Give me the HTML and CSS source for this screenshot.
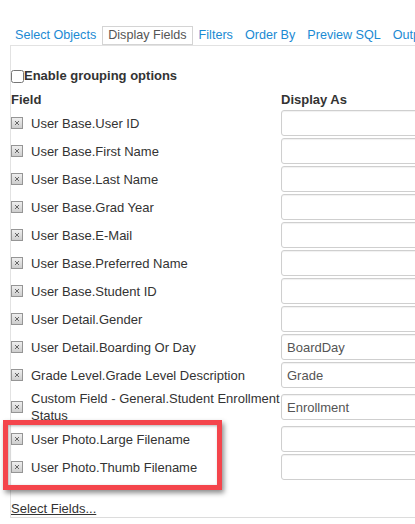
FILE: index.html
```html
<!DOCTYPE html>
<html>
<head>
<meta charset="utf-8">
<link rel="stylesheet" href="styles.css">
</head>
<body>
<div class="tabs">
  <a class="tab">Select Objects</a>
  <a class="tab active">Display Fields</a>
  <a class="tab">Filters</a>
  <a class="tab">Order By</a>
  <a class="tab">Preview SQL</a>
  <a class="tab">Output</a>
</div>
<div class="panel">
  <label class="group"><input type="checkbox" class="chk">Enable grouping options</label>
  <table class="fields">
    <colgroup><col class="c1"><col class="c2"></colgroup>
    <thead><tr><th>Field</th><th>Display As</th></tr></thead>
    <tbody>
      <tr><td><div class="f"><svg class="x" viewBox="0 0 12 12"><use href="#xi"/></svg><span>User Base.User ID</span></div></td><td><input class="inp" type="text"></td></tr>
      <tr><td><div class="f"><svg class="x" viewBox="0 0 12 12"><use href="#xi"/></svg><span>User Base.First Name</span></div></td><td><input class="inp" type="text"></td></tr>
      <tr><td><div class="f"><svg class="x" viewBox="0 0 12 12"><use href="#xi"/></svg><span>User Base.Last Name</span></div></td><td><input class="inp" type="text"></td></tr>
      <tr><td><div class="f"><svg class="x" viewBox="0 0 12 12"><use href="#xi"/></svg><span>User Base.Grad Year</span></div></td><td><input class="inp" type="text"></td></tr>
      <tr><td><div class="f"><svg class="x" viewBox="0 0 12 12"><use href="#xi"/></svg><span>User Base.E-Mail</span></div></td><td><input class="inp" type="text"></td></tr>
      <tr><td><div class="f"><svg class="x" viewBox="0 0 12 12"><use href="#xi"/></svg><span>User Base.Preferred Name</span></div></td><td><input class="inp" type="text"></td></tr>
      <tr><td><div class="f"><svg class="x" viewBox="0 0 12 12"><use href="#xi"/></svg><span>User Base.Student ID</span></div></td><td><input class="inp" type="text"></td></tr>
      <tr><td><div class="f"><svg class="x" viewBox="0 0 12 12"><use href="#xi"/></svg><span>User Detail.Gender</span></div></td><td><input class="inp" type="text"></td></tr>
      <tr><td><div class="f"><svg class="x" viewBox="0 0 12 12"><use href="#xi"/></svg><span>User Detail.Boarding Or Day</span></div></td><td><input class="inp" type="text" value="BoardDay"></td></tr>
      <tr><td><div class="f"><svg class="x" viewBox="0 0 12 12"><use href="#xi"/></svg><span>Grade Level.Grade Level Description</span></div></td><td><input class="inp" type="text" value="Grade"></td></tr>
      <tr><td><div class="f"><svg class="x" viewBox="0 0 12 12"><use href="#xi"/></svg><span>Custom Field - General.Student Enrollment Status</span></div></td><td><input class="inp" type="text" value="Enrollment"></td></tr>
      <tr><td><div class="f"><svg class="x" viewBox="0 0 12 12"><use href="#xi"/></svg><span>User Photo.Large Filename</span></div></td><td><input class="inp" type="text"></td></tr>
      <tr><td><div class="f"><svg class="x" viewBox="0 0 12 12"><use href="#xi"/></svg><span>User Photo.Thumb Filename</span></div></td><td><input class="inp" type="text"></td></tr>
    </tbody>
  </table>
  <a class="select">Select Fields...</a>
</div>
<div class="highlight"></div>
<svg class="defs" width="0" height="0">
  <defs>
    <linearGradient id="xg" x1="0" y1="0" x2="0" y2="1">
      <stop offset="0" stop-color="#f0f0f0"/>
      <stop offset="1" stop-color="#cccccc"/>
    </linearGradient>
    <g id="xi">
      <rect x="0.5" y="0.5" width="11" height="11" fill="url(#xg)" stroke="#959595"/>
      <path d="M4 4 L8 8 M8 4 L4 8" stroke="#666" stroke-width="1" fill="none"/>
    </g>
  </defs>
</svg>
</body>
</html>
```
FILE: styles.css
```css
html, body {
  margin: 0;
  padding: 0;
  overflow: hidden;
  background: #fff;
}
body {
  font-family: "Liberation Sans", Arial, sans-serif;
  font-size: 13px;
  color: #333;
  width: 415px;
  height: 524px;
}
.tabs {
  display: flex;
  margin-top: 26px;
  padding-left: 9px;
  white-space: nowrap;
}
.tab {
  display: block;
  padding: 1px 5px;
  line-height: 15px;
  font-size: 12.6px;
  border: 1px solid transparent;
  color: #1b8ad3;
  flex: none;
}
.tab.active {
  color: #555;
  border-color: #d4d4d4;
  background: #fff;
}
.panel {
  margin-left: 10px;
  width: 500px;
  border-top: 1px solid #e2e2e2;
  border-left: 1px solid #e2e2e2;
  border-bottom: 1px solid #dcdcdc;
}
.group {
  display: flex;
  align-items: center;
  margin-top: 22px;
  line-height: 16px;
  font-weight: bold;
}
.chk {
  margin: 0;
  width: 13px;
  height: 13px;
}
.fields {
  margin-top: 7px;
  border-collapse: collapse;
  table-layout: fixed;
  width: 480px;
}
.c1 { width: 270px; }
.c2 { width: 210px; }
.fields th {
  text-align: left;
  font-weight: bold;
  padding: 1px 0;
  line-height: 16px;
}
.fields td {
  padding: 1px 0;
  line-height: 17px;
  vertical-align: middle;
}
.f {
  display: flex;
  align-items: center;
  gap: 8px;
}
.x {
  width: 12px;
  height: 12px;
  flex: none;
}
.inp {
  display: block;
  box-sizing: border-box;
  width: 200px;
  height: 26px;
  margin: 0;
  padding: 0 5px;
  border: 1px solid #cfcfcf;
  border-radius: 3px;
  box-shadow: inset 0 1px 1px rgba(0,0,0,0.06);
  font-family: "Liberation Sans", Arial, sans-serif;
  font-size: 13px;
  color: #555;
  background: #fff;
}
.select {
  display: block;
  margin-top: 19px;
  line-height: 17px;
  color: #333;
  text-decoration: underline;
}
.highlight {
  position: absolute;
  left: 3px;
  top: 420px;
  width: 209px;
  height: 60px;
  border: 5px solid #f4454c;
  box-shadow: 2px 3px 5px rgba(0,0,0,0.45), inset 1px 1px 3px rgba(0,0,0,0.3);
}
.defs {
  position: absolute;
  width: 0;
  height: 0;
}
```
